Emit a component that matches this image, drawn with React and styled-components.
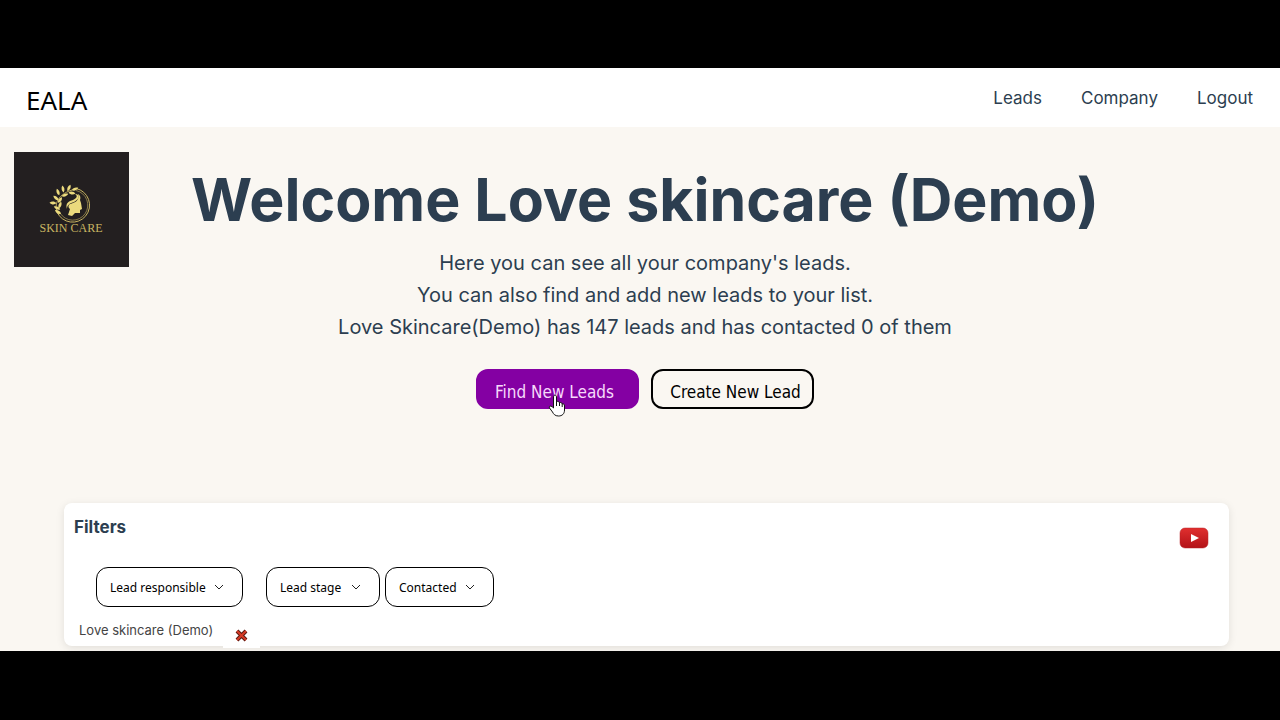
import React, { useState } from 'react';
import styled, { createGlobalStyle } from 'styled-components';

const GlobalStyle = createGlobalStyle`
  * {
    box-sizing: border-box;
  }

  body {
    margin: 0;
    background: #000;
    font-family: Inter, sans-serif;
    color: #2c3e50;
  }
`;

const Screen = styled.div`
  padding: 68px 0 69px;
  background: #000;
`;

const Page = styled.div`
  background: #faf7f2;
  overflow: hidden;
`;

const Navbar = styled.header`
  display: flex;
  justify-content: space-between;
  align-items: center;
  height: 59px;
  padding: 0 27px 0 26px;
  background: #fff;
`;

const Brand = styled.a`
  padding-top: 4px;
  font-family: "Noto Sans", sans-serif;
  font-size: 26px;
  line-height: 32px;
  color: #000;
  text-decoration: none;
`;

const NavLinks = styled.nav`
  display: flex;
  gap: 39px;

  a {
    font-size: 17px;
    line-height: 24px;
    color: #2c3e50;
    text-decoration: none;
  }
`;

const Hero = styled.section`
  display: grid;
  grid-template-columns: 115px 1fr 115px;
  padding: 25px 4px 94px 14px;
`;

const Logo = styled.svg`
  display: block;
  width: 115px;
  height: 115px;
  background: #231f20;
`;

const Intro = styled.div`
  padding-top: 11px;
  text-align: center;
`;

const Title = styled.h1`
  margin: 0 0 11px;
  font-size: 59px;
  line-height: 73px;
  font-weight: 700;
`;

const Text = styled.p`
  margin: 0;
  font-size: 20px;
  line-height: 32px;
`;

const Actions = styled.div`
  display: flex;
  justify-content: center;
  gap: 12px;
  margin-top: 26px;
`;

const ActionButton = styled.button`
  position: relative;
  width: 163px;
  height: 40px;
  padding: ${(props) => (props.$primary ? '6px 6px 0 0' : '6px 0 0 6px')};
  border: 2px solid ${(props) => (props.$primary ? '#8400a3' : '#000')};
  border-radius: 12px;
  background: ${(props) => (props.$primary ? '#8400a3' : 'transparent')};
  color: ${(props) => (props.$primary ? '#f6d9fb' : '#000')};
  font-family: "DejaVu Sans Condensed", "DejaVu Sans", sans-serif;
  font-size: 17px;
  line-height: 24px;
  white-space: nowrap;
`;

const Pointer = styled.svg`
  position: absolute;
  left: 70px;
  top: 23px;
  width: 18px;
  height: 24px;
`;

const Filters = styled.section`
  display: grid;
  grid-template-columns: 1fr auto;
  margin: 0 51px 5px 64px;
  height: 143px;
  padding: 0 20px 0 10px;
  border-radius: 8px;
  background: #fff;
  box-shadow: 0 2px 8px rgba(0, 0, 0, 0.1);

  h2 {
    margin: 12px 0 28px;
    font-size: 17px;
    line-height: 24px;
    font-weight: 700;
  }
`;

const FilterRow = styled.div`
  display: flex;
  padding-left: 22px;
`;

const SelectBox = styled.label`
  display: grid;
  align-items: center;
  width: ${(props) => props.$width}px;
  margin-right: ${(props) => props.$gap || 0}px;

  select,
  svg {
    grid-area: 1 / 1;
  }

  select {
    appearance: none;
    width: 100%;
    height: 40px;
    padding: 0 13px;
    border: 1px solid #000;
    border-radius: 12px;
    background: #fff;
    color: #000;
    font-family: "Noto Sans", sans-serif;
    font-size: 12px;
  }

  svg {
    justify-self: end;
    width: 10px;
    height: 6px;
    margin-right: 19px;
    pointer-events: none;
  }
`;

const Selected = styled.div`
  display: flex;
  padding-left: 5px;

  span {
    padding-top: 13px;
    font-size: 13px;
    line-height: 20px;
    color: #444;
  }
`;

const RemoveButton = styled.button`
  display: flex;
  align-items: center;
  justify-content: center;
  width: 37px;
  height: 25px;
  margin: 16px 0 0 10px;
  padding: 0;
  border: 0;
  background: #fff;
`;

const VideoLink = styled.a`
  display: block;
  height: 22px;
  margin-top: 24px;
`;

const leaf = 'M0 3.500C-2 1.500 -1.800 -1.500 0 -3.500C1.800 -1.500 2 1.500 0 3.500Z';

// x, y of the leaf's middle and its turn in degrees
const leaves = [
  [39, 51, -85], [42, 46, -50], [44, 40, -20], [49, 37, -10],
  [55, 36, 25], [61, 37, 70], [58, 41, 100], [51, 43, 70],
  [46, 48, 35], [43, 56, -65], [46, 53, 20], [44, 60, -60],
];

function SkinCareLogo() {
  return (
    <Logo viewBox="0 0 115 115" role="img" aria-label="Skin care">
      <g fill="none" stroke="#c9b562">
        <path d="M62 36.500A17 17 0 1 1 43 60" strokeWidth="1" />
        <path d="M62 38.500A15 15 0 1 1 46 61" strokeWidth="0.600" />
        <path d="M45 63C39 55 42 43 58 38" strokeWidth="0.900" />
      </g>
      <g fill="#ebda7d">
        {leaves.map(([x, y, turn]) => (
          <path key={`${x}-${y}`} d={leaf} transform={`translate(${x} ${y}) rotate(${turn})`} />
        ))}
        <path d="M64 42C66 43 67 45 66 48L67 51L68 57L66 58L66 61L61 61L58 64L54 63L56 57C54 56 54 53 56 52C61 51 66 48 64 42Z" />
        <path d="M53 57C51 51 55 49 59 48C63 46 64 44 61 42C66 42 66 47 60 50C56 51 53 53 53 57Z" />
      </g>
      <text
        x="57"
        y="80"
        textAnchor="middle"
        fontFamily="Liberation Serif, serif"
        fontSize="12"
        fill="#c9b562"
      >
        SKIN CARE
      </text>
    </Logo>
  );
}

function FilterSelect({ label, width, gap }) {
  return (
    <SelectBox $width={width} $gap={gap}>
      <select aria-label={label}>
        <option>{label}</option>
      </select>
      <svg viewBox="0 0 10 6" fill="none" stroke="#222">
        <path d="M1 1L5 5L9 1" />
      </svg>
    </SelectBox>
  );
}

function App() {
  const [responsible, setResponsible] = useState('Love skincare (Demo)');

  return (
    <Screen>
      <GlobalStyle />
      <Page>
        <Navbar>
          <Brand href="/">EALA</Brand>
          <NavLinks>
            <a href="/leads">Leads</a>
            <a href="/company">Company</a>
            <a href="/logout">Logout</a>
          </NavLinks>
        </Navbar>

        <Hero>
          <SkinCareLogo />
          <Intro>
            <Title>Welcome Love skincare (Demo)</Title>
            <Text>Here you can see all your company's leads.</Text>
            <Text>You can also find and add new leads to your list.</Text>
            <Text>Love Skincare(Demo) has 147 leads and has contacted 0 of them</Text>
            <Actions>
              <ActionButton type="button" $primary>
                Find New Leads
                <Pointer viewBox="0 0 18 24" aria-hidden="true">
                  <path
                    d="M5.500 12V3C5.500 .5 8.500 .5 8.500 3V8C9.500 6.800 11.300 7.300 11.500 9C12.500 8 14 8.500 14.200 10C15.500 9.300 16.500 10.200 16.500 12V16C16.500 20 14 22 10.500 22C7 22 5.500 20 4.500 18L1.500 14C.5 12 3 11 5.500 14Z"
                    fill="#fff"
                    stroke="#111"
                  />
                  <path d="M8.500 8V12M11.500 9V12M14.200 10V13" stroke="#111" />
                </Pointer>
              </ActionButton>
              <ActionButton type="button">Create New Lead</ActionButton>
            </Actions>
          </Intro>
        </Hero>

        <Filters>
          <div>
            <h2>Filters</h2>
            <FilterRow>
              <FilterSelect label="Lead responsible" width={147} gap={23} />
              <FilterSelect label="Lead stage" width={114} gap={5} />
              <FilterSelect label="Contacted" width={109} />
            </FilterRow>
            {responsible && (
              <Selected>
                <span>{responsible}</span>
                <RemoveButton type="button" aria-label="Remove filter" onClick={() => setResponsible('')}>
                  <svg width="13" height="13" viewBox="0 0 13 13">
                    <path d="M2 2L11 11M11 2L2 11" stroke="#5c1a12" strokeWidth="4" />
                    <path d="M2 2L11 11M11 2L2 11" stroke="#d63a25" strokeWidth="2" />
                  </svg>
                </RemoveButton>
              </Selected>
            )}
          </div>
          <VideoLink href="/tutorial" aria-label="Watch tutorial">
            <svg width="30" height="22" viewBox="0 0 30 22">
              <defs>
                <linearGradient id="tube" x2="0" y2="1">
                  <stop stopColor="#e02f2f" />
                  <stop offset="1" stopColor="#b31217" />
                </linearGradient>
              </defs>
              <rect x="1" y="1" width="28" height="20" rx="5" fill="url(#tube)" stroke="#b8252a" strokeWidth="0.500" />
              <path d="M12 7L20 11L12 15Z" fill="#fff" />
            </svg>
          </VideoLink>
        </Filters>
      </Page>
    </Screen>
  );
}

export default App;
